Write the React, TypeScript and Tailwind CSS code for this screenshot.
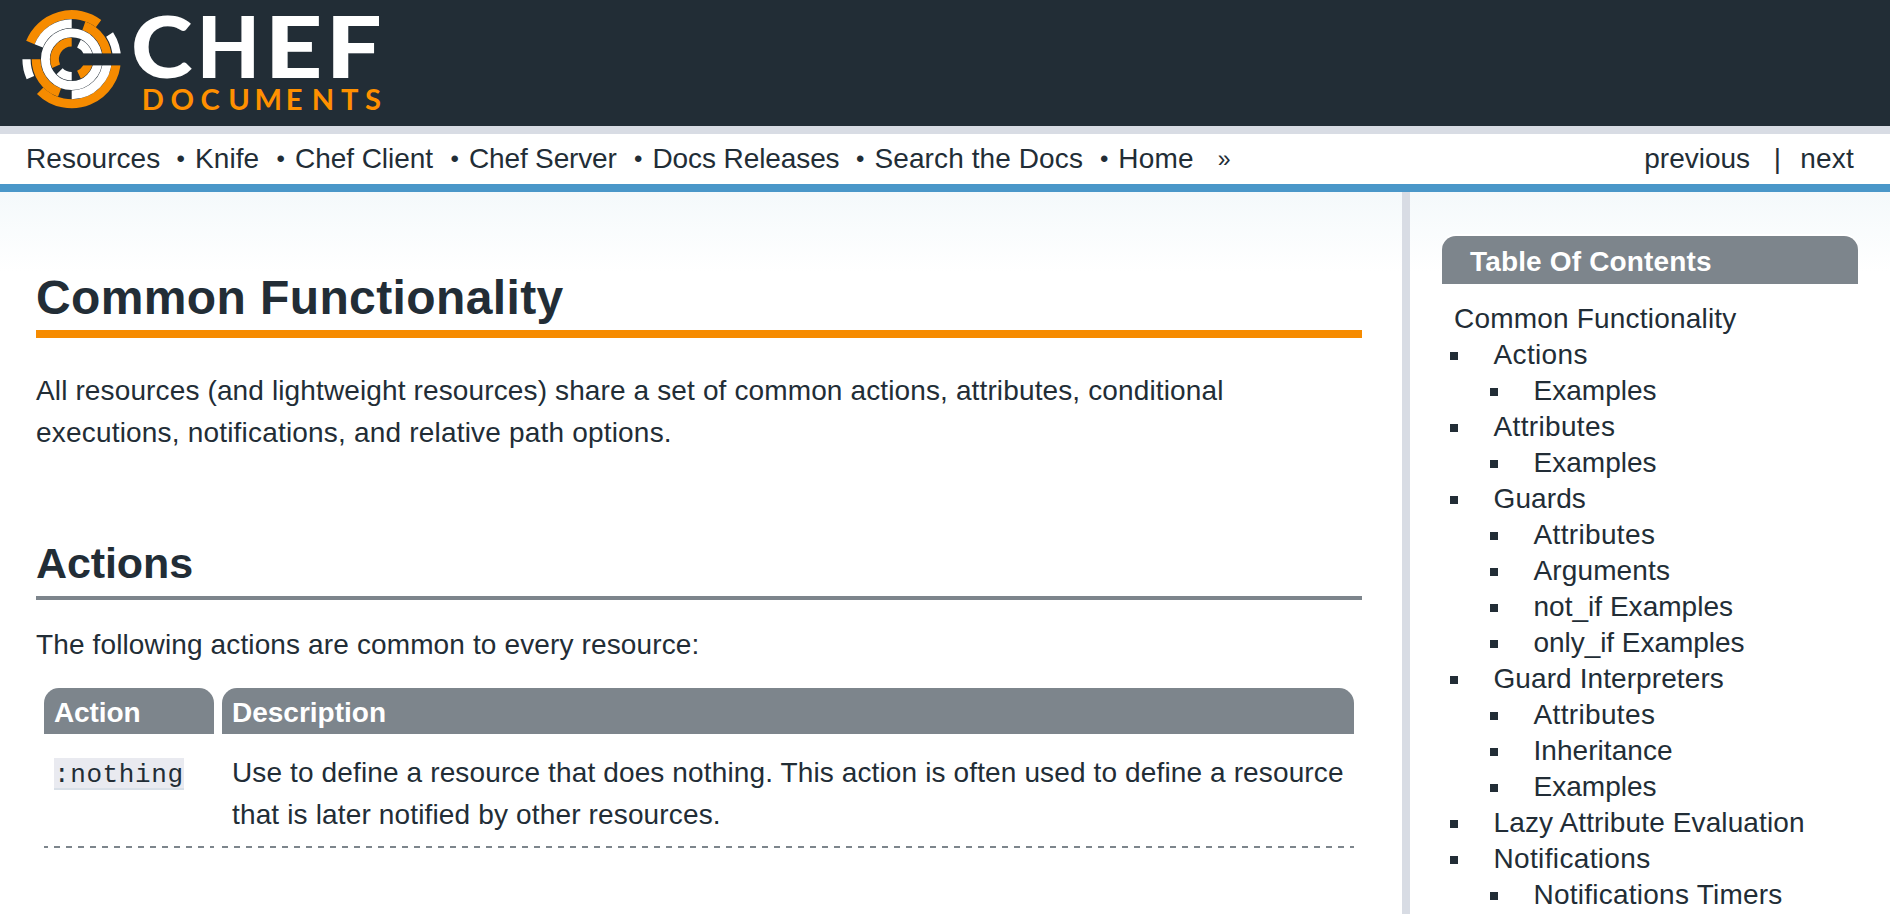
const ORANGE = '#f68b00';
const WHITE = '#ffffff';

/** Ring segment of the logo; angles are in degrees, counter-clockwise from east. */
function Segment({ r, w, from, to, color }: { r: number; w: number; from: number; to: number; color: string }) {
  const cx = 71.7;
  const cy = 59.2;
  const rad = Math.PI / 180;
  const x1 = cx + r * Math.cos(from * rad);
  const y1 = cy - r * Math.sin(from * rad);
  const x2 = cx + r * Math.cos(to * rad);
  const y2 = cy - r * Math.sin(to * rad);
  const large = to - from > 180 ? 1 : 0;
  return <path d={`M${x1} ${y1}A${r} ${r} 0 ${large} 0 ${x2} ${y2}`} fill="none" stroke={color} strokeWidth={w} />;
}

function Logo() {
  return (
    <svg width="400" height="126" viewBox="0 0 400 126" aria-label="Chef Documents">
      <Segment r={44.6} w={9} from={53} to={158} color={ORANGE} />
      <Segment r={44.6} w={9} from={225} to={360} color={ORANGE} />
      <Segment r={45.2} w={8.2} from={180} to={204} color={WHITE} />
      <Segment r={45.2} w={8.2} from={0} to={33} color={WHITE} />
      <Segment r={35.6} w={8.8} from={90} to={158} color={WHITE} />
      <Segment r={35.6} w={8.8} from={0} to={70} color={ORANGE} />
      <Segment r={35.6} w={8.8} from={180} to={250} color={ORANGE} />
      <Segment r={35.6} w={8.8} from={270} to={360} color={WHITE} />
      <circle cx="71.7" cy="59.2" r="26.3" fill="none" stroke={WHITE} strokeWidth="8.9" />
      <Segment r={17.1} w={8.6} from={90} to={204} color={ORANGE} />
      <Segment r={17.1} w={8.6} from={225} to={270} color={WHITE} />
      <Segment r={17.1} w={8.6} from={295} to={360} color={ORANGE} />
      <Segment r={17.1} w={8.6} from={0} to={65} color={WHITE} />
      <rect x="81" y="53.4" width="42" height="12" fill="#222d36" />
      <text y="78" fill="#fff" fontFamily="Lato, sans-serif" fontWeight="900" fontSize="85">
        <tspan x="131" textLength="61.5" lengthAdjust="spacingAndGlyphs">C</tspan>
        <tspan x="196.8" textLength="63.3" lengthAdjust="spacingAndGlyphs">H</tspan>
        <tspan x="264.8" textLength="57.7" lengthAdjust="spacingAndGlyphs">E</tspan>
        <tspan x="325.8" textLength="56" lengthAdjust="spacingAndGlyphs">F</tspan>
      </text>
      <text
        transform="scale(1.04 1)"
        x="136.3 164 192.9 219.4 244.8 274.7 299.7 327.9 351"
        y="110"
        fill="#ff9000"
        fontFamily="Lato, sans-serif"
        fontWeight="700"
        fontSize="28"
      >
        DOCUMENTS
      </text>
    </svg>
  );
}

const NAV = [
  { label: 'Resources', cls: 'w-[169px] tracking-[0.05px]' },
  { label: 'Knife', cls: 'w-[100px] tracking-[0.09px]' },
  { label: 'Chef Client', cls: 'w-[174px] tracking-[-0.05px]' },
  { label: 'Chef Server', cls: 'w-[183.5px] tracking-[-0.16px]' },
  { label: 'Docs Releases', cls: 'w-[222px] tracking-[-0.1px]' },
  { label: 'Search the Docs', cls: 'w-[243.8px] tracking-[0.1px]' },
];

const TOC = [
  { label: 'Actions', sub: false, cls: 'tracking-[0.35px]' },
  { label: 'Examples', sub: true, cls: 'tracking-[0.02px]' },
  { label: 'Attributes', sub: false, cls: 'tracking-[0.35px]' },
  { label: 'Examples', sub: true, cls: 'tracking-[0.02px]' },
  { label: 'Guards', sub: false, cls: 'tracking-[0.1px]' },
  { label: 'Attributes', sub: true, cls: 'tracking-[0.35px]' },
  { label: 'Arguments', sub: true, cls: 'tracking-[0.13px]' },
  { label: 'not_if Examples', sub: true, cls: 'tracking-[0.02px]' },
  { label: 'only_if Examples', sub: true, cls: 'tracking-[-0.05px]' },
  { label: 'Guard Interpreters', sub: false, cls: 'tracking-[0.09px]' },
  { label: 'Attributes', sub: true, cls: 'tracking-[0.35px]' },
  { label: 'Inheritance', sub: true, cls: 'tracking-[0.05px]' },
  { label: 'Examples', sub: true, cls: 'tracking-[0.02px]' },
  { label: 'Lazy Attribute Evaluation', sub: false, cls: 'tracking-[0.12px]' },
  { label: 'Notifications', sub: false, cls: 'tracking-[0.35px]' },
  { label: 'Notifications Timers', sub: true, cls: 'tracking-[0.24px]' },
];

export default function App() {
  return (
    <div className="flex h-[914px] w-full flex-col overflow-hidden bg-white font-['Liberation_Sans',Arial,sans-serif] text-[28px] text-[#222d36]">
      <header className="h-[134px] shrink-0 border-b-8 border-[#d8dce4] bg-[#222d36]">
        <Logo />
      </header>

      <nav className="flex h-[58px] shrink-0 items-start border-b-8 border-[#4a97c9] pl-[26px] leading-[50px] whitespace-nowrap">
        {NAV.map((n) => (
          <div key={n.label} className={`flex shrink-0 justify-between pr-[10px] ${n.cls}`}>
            <a>{n.label}</a>
            <span className="text-[24px] tracking-normal">•</span>
          </div>
        ))}
        <a className="w-[99.5px] tracking-[0.2px]">Home</a>
        <span className="text-[23px]">»</span>
        <div className="ml-auto flex pr-[36px]">
          <a className="w-[129.5px]">previous</a>
          <span className="w-[26.5px]">|</span>
          <a className="tracking-[0.2px]">next</a>
        </div>
      </nav>

      <div className="flex min-h-0 flex-1 bg-linear-to-b from-[#f4f9fb] to-white to-[80px]">
        <main className="w-[1402px] shrink-0 pr-10 pl-9 leading-[42px] tracking-[0.13px]">
          <h1 className="mt-[75px] h-[71px] border-b-8 border-[#f68b00] text-[48px] leading-[62px] font-bold tracking-[0.38px]">
            Common Functionality
          </h1>
          <p className="mt-8 whitespace-nowrap">
            All resources (and lightweight resources) share a set of common actions, attributes, conditional
            <br />
            <span className="tracking-[0.19px]">executions, notifications, and relative path options.</span>
          </p>

          <h2 className="mt-[80px] h-[66px] border-b-4 border-[#7d858c] text-[43px] leading-[58px] font-bold tracking-[-0.1px]">
            Actions
          </h2>
          <p className="mt-[24px]">The following actions are common to every resource:</p>

          <div className="mx-2 mt-[22px] grid grid-cols-[170px_1132px] gap-x-2">
            <div className="h-[46px] rounded-t-[15px] bg-[#7d858c] pl-[10px] leading-[50px] font-bold tracking-[-0.12px] text-white">
              Action
            </div>
            <div className="h-[46px] rounded-t-[15px] bg-[#7d858c] pl-[10px] leading-[50px] font-bold tracking-normal text-white">
              Description
            </div>
            <div className="h-[112px] pt-6 pl-[10px]">
              <code className="flex h-8 w-[130px] border-b-2 border-[#d8dfe7] bg-[#e9eaf0] font-['Liberation_Mono',monospace] text-[26px] leading-[34px] tracking-[0.6px]">
                :nothing
              </code>
            </div>
            <div className="h-[112px] pt-[18px] pl-[10px] whitespace-nowrap">
              Use to define a resource that does nothing. This action is often used to define a resource
              <br />
              <span className="tracking-[0.15px]">that is later notified by other resources.</span>
            </div>
            <div className="h-0.5 bg-[repeating-linear-gradient(90deg,#7d858c_0px,#7d858c_4px,transparent_4px,transparent_10px,#7d858c_10px,#7d858c_12px)]" />
            <div className="h-0.5 bg-[repeating-linear-gradient(90deg,#7d858c_0px,#7d858c_6px,transparent_6px,transparent_12px)]" />
          </div>
        </main>

        <aside className="flex-1 border-l-8 border-[#d8dce4] px-8 pt-[44px] leading-9">
          <h3 className="h-12 rounded-t-[14px] bg-[#7d858c] pl-7 leading-[52px] font-bold tracking-[0.16px] text-white shadow-[0_-2px_0_#fff]">
            Table Of Contents
          </h3>
          <div className="mt-4 h-9 pl-[12px] leading-[38px] tracking-[0.2px]">Common Functionality</div>
          <ul className="leading-[38px] whitespace-nowrap">
            {TOC.map((t, i) => (
              <li key={i} className={`flex h-9 items-start ${t.sub ? 'pl-12' : 'pl-2'}`}>
                <span className="mt-[16px] size-2 bg-[#222d36]" />
                <a className={`ml-[35.5px] ${t.cls}`}>{t.label}</a>
              </li>
            ))}
          </ul>
        </aside>
      </div>
    </div>
  );
}
